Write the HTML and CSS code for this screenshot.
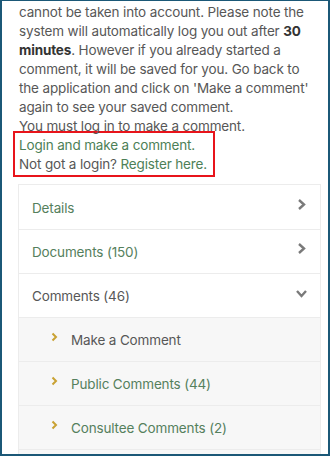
FILE: index.html
```html
<!DOCTYPE html>
<html>
<head>
<meta charset="utf-8">
<link rel="stylesheet" href="styles.css">
</head>
<body>
<div class="frame">
  <div class="content">
    <p class="intro">cannot be taken into account. Please note the system will automatically log you out after <strong>30</strong> <strong>minutes</strong>. However if you already started a comment, it will be saved for you. Go back to the application and click on 'Make a comment' again to see your saved comment.<br>You must log in to make a comment.</p>
    <div class="highlight">
      <a class="link" href="#">Login and make a comment.</a><br>
      Not got a login? <a class="link" href="#">Register here.</a>
    </div>
    <div class="card">
      <div class="row">
        <span class="row-label green">Details</span>
        <svg class="chev" width="9" height="13" viewBox="0 0 9 13"><path d="M2 2 L7 6.5 L2 11" fill="none" stroke="#7a7a7a" stroke-width="2.4"/></svg>
      </div>
      <div class="row">
        <span class="row-label green">Documents (150)</span>
        <svg class="chev" width="9" height="13" viewBox="0 0 9 13"><path d="M2 2 L7 6.5 L2 11" fill="none" stroke="#7a7a7a" stroke-width="2.4"/></svg>
      </div>
      <div class="row">
        <span class="row-label">Comments (46)</span>
        <svg class="chev down" width="13" height="9" viewBox="0 0 13 9"><path d="M2 2 L6.5 7 L11 2" fill="none" stroke="#7a7a7a" stroke-width="2.4"/></svg>
      </div>
      <div class="sub">
        <svg class="gold" width="7" height="10" viewBox="0 0 7 10"><path d="M1.5 1.5 L5 5 L1.5 8.5" fill="none" stroke="#c9a233" stroke-width="2"/></svg>
        <span class="sub-label">Make a Comment</span>
      </div>
      <div class="sub">
        <svg class="gold" width="7" height="10" viewBox="0 0 7 10"><path d="M1.5 1.5 L5 5 L1.5 8.5" fill="none" stroke="#c9a233" stroke-width="2"/></svg>
        <span class="sub-label green">Public Comments (44)</span>
      </div>
      <div class="sub">
        <svg class="gold" width="7" height="10" viewBox="0 0 7 10"><path d="M1.5 1.5 L5 5 L1.5 8.5" fill="none" stroke="#c9a233" stroke-width="2"/></svg>
        <span class="sub-label green">Consultee Comments (2)</span>
      </div>
      <div class="sub"></div>
    </div>
  </div>
</div>
</body>
</html>
```
FILE: styles.css
```css
html, body {
  margin: 0;
  padding: 0;
  background: #fff;
}
.frame {
  box-sizing: border-box;
  width: 330px;
  height: 456px;
  border-style: solid;
  border-color: #1b5877;
  border-width: 1px 2px 2px 2px;
  overflow: hidden;
  background: #fff;
}
.content {
  padding: 2px 7px 0 17px;
  font-family: Inter, "Liberation Sans", sans-serif;
  font-size: 13.5px;
  letter-spacing: -0.15px;
  line-height: 19px;
  color: #575757;
}
.intro {
  margin: 0;
}
.intro strong {
  color: #333;
  font-weight: 700;
}
.highlight {
  box-sizing: border-box;
  margin: -5px 0 0 -6px;
  width: 202px;
  border: 2px solid #e8141b;
  padding: 3px 0 1px 4px;
  white-space: nowrap;
}
.link {
  color: #4d7f57;
  text-decoration: none;
}
.card {
  margin: 7px 0 0 -1px;
  width: 301px;
  border: 1px solid #ececec;
  border-bottom: none;
}
.row {
  display: flex;
  align-items: center;
  justify-content: space-between;
  height: 43px;
  padding: 0 14px 0 13px;
  border-bottom: 1px solid #ececec;
  background: #fff;
}
.row:first-child {
  height: 44px;
}
.row-label {
  color: #575757;
  padding-top: 2px;
}
.sub {
  display: flex;
  align-items: center;
  height: 43px;
  padding-left: 32px;
  border-bottom: 1px solid #ececec;
  background: #f7f7f7;
}
.gold {
  margin-top: -6px;
  margin-right: 13px;
}
.sub-label {
  color: #575757;
  padding-top: 2px;
}
.chev {
  margin-top: -6px;
}
.chev.down {
  margin-top: -4px;
  margin-right: -2px;
}
.row-label.green,
.sub-label.green {
  color: #55805d;
}
```
